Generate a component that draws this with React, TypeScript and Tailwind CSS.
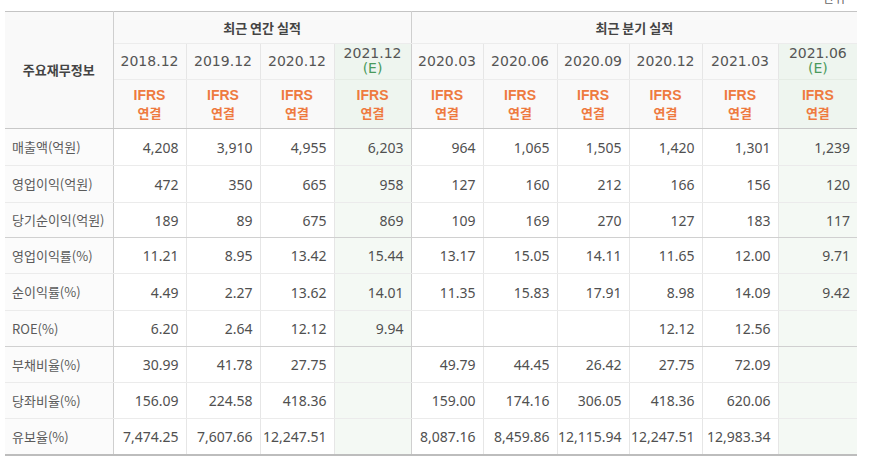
import React from "react";

const annual = ["2018.12", "2019.12", "2020.12"];
const quarter = ["2020.03", "2020.06", "2020.09", "2020.12", "2021.03"];
const widths = [108, 73, 74, 74, 77, 72, 74, 72, 73, 76, 79];

type Row = { label: string; v: string[]; h: number; strong?: boolean };

const rows: Row[] = [
  { label: "매출액(억원)", v: ["4,208", "3,910", "4,955", "6,203", "964", "1,065", "1,505", "1,420", "1,301", "1,239"], h: 37 },
  { label: "영업이익(억원)", v: ["472", "350", "665", "958", "127", "160", "212", "166", "156", "120"], h: 37 },
  { label: "당기순이익(억원)", v: ["189", "89", "675", "869", "109", "169", "270", "127", "183", "117"], h: 35, strong: true },
  { label: "영업이익률(%)", v: ["11.21", "8.95", "13.42", "15.44", "13.17", "15.05", "14.11", "11.65", "12.00", "9.71"], h: 36 },
  { label: "순이익률(%)", v: ["4.49", "2.27", "13.62", "14.01", "11.35", "15.83", "17.91", "8.98", "14.09", "9.42"], h: 37 },
  { label: "ROE(%)", v: ["6.20", "2.64", "12.12", "9.94", "", "", "", "12.12", "12.56", ""], h: 36, strong: true },
  { label: "부채비율(%)", v: ["30.99", "41.78", "27.75", "", "49.79", "44.45", "26.42", "27.75", "72.09", ""], h: 36 },
  { label: "당좌비율(%)", v: ["156.09", "224.58", "418.36", "", "159.00", "174.16", "306.05", "418.36", "620.06", ""], h: 36 },
  { label: "유보율(%)", v: ["7,474.25", "7,607.66", "12,247.51", "", "8,087.16", "8,459.86", "12,115.94", "12,247.51", "12,983.34", ""], h: 36 },
];

const kr = { fontFamily: '"Noto Sans CJK KR", "Noto Sans", sans-serif' };
const dateFont = { fontFamily: '"DejaVu Sans", "Noto Sans CJK KR", sans-serif' };

function Ifrs() {
  return (
    <div className="flex flex-col items-center text-[13px] font-bold leading-[17px] text-[#ee7a3f]" style={kr}>
      <span style={{ fontFamily: '"Liberation Sans", Arial, sans-serif' }} className="text-[14px]">IFRS</span>
      <span>연결</span>
    </div>
  );
}

export default function App() {
  return (
    <div className="w-[869px] h-[459px] bg-white overflow-hidden" style={kr}>
      <div className="h-[11px] overflow-hidden flex justify-end pr-[24px]">
        <span className="-mt-[9px] text-[12px] leading-[14px] text-[#666]">단위</span>
      </div>
      <table className="ml-[5px] table-fixed border-collapse" style={{ width: 852 }}>
        <colgroup>
          {widths.map((w, i) => (
            <col key={i} style={{ width: w }} />
          ))}
        </colgroup>
        <thead>
          <tr className="h-[32px]">
            <th
              rowSpan={3}
              className="border-t border-t-[#c4c4c4] border-b border-b-[#c8c8c8] border-r border-r-[#cfcfcf] bg-[#f9f9f9] text-[13px] font-bold text-[#444]"
            >
              주요재무정보
            </th>
            <th
              colSpan={4}
              className="border-t border-t-[#c4c4c4] border-r border-r-[#cfcfcf] border-b border-b-[#ececec] bg-[#f9f9f9] text-[13px] font-bold text-[#444]"
            >
              최근 연간 실적
            </th>
            <th
              colSpan={6}
              className="border-t border-t-[#c4c4c4] border-b border-b-[#ececec] bg-[#f9f9f9] text-[13px] font-bold text-[#444]"
            >
              최근 분기 실적
            </th>
          </tr>
          <tr className="h-[36px]">
            {annual.map((d) => (
              <th key={d} className="border-r border-r-[#e6e6e6] border-b border-b-[#ececec] bg-[#f9f9f9] text-[14px] font-normal text-[#555]" style={dateFont}>
                {d}
              </th>
            ))}
            <th className="border-r border-r-[#cfcfcf] border-b border-b-[#e4ece4] bg-[#eef5ef] text-[14px] font-normal text-[#555] leading-[15px]" style={dateFont}>
              <div className="flex flex-col items-center -mt-[2px]">
                <span>2021.12</span>
                <span className="text-[#4a9a5c]">(E)</span>
              </div>
            </th>
            {quarter.map((d) => (
              <th key={d} className="border-r border-r-[#e6e6e6] border-b border-b-[#ececec] bg-[#f9f9f9] text-[14px] font-normal text-[#555]" style={dateFont}>
                {d}
              </th>
            ))}
            <th className="border-b border-b-[#e4ece4] bg-[#eef5ef] text-[14px] font-normal text-[#555] leading-[15px]" style={dateFont}>
              <div className="flex flex-col items-center -mt-[2px]">
                <span>2021.06</span>
                <span className="text-[#4a9a5c]">(E)</span>
              </div>
            </th>
          </tr>
          <tr className="h-[49px]">
            {Array.from({ length: 10 }).map((_, i) => {
              const est = i === 3 || i === 9;
              const rb = i === 3 ? "border-r border-r-[#cfcfcf]" : i === 9 ? "" : "border-r border-r-[#e6e6e6]";
              return (
                <th key={i} className={`${rb} border-b border-b-[#c8c8c8] ${est ? "bg-[#eef5ef]" : "bg-[#f9f9f9]"}`}>
                  <Ifrs />
                </th>
              );
            })}
          </tr>
        </thead>
        <tbody>
          {rows.map((r, ri) => {
            const last = ri === rows.length - 1;
            const bb = last ? "border-b-2 border-b-[#bdbdbd]" : r.strong ? "border-b border-b-[#d0d0d0]" : "border-b border-b-[#ebebeb]";
            return (
              <tr key={r.label} style={{ height: r.h }}>
                <td className={`${bb} border-r border-r-[#cfcfcf] bg-[#fbfbfb] pl-[7px] text-[13px] text-[#5a5a5a]`}>{r.label}</td>
                {r.v.map((v, i) => {
                  const est = i === 3 || i === 9;
                  const rb = i === 3 ? "border-r border-r-[#cfcfcf]" : i === 9 ? "" : "border-r border-r-[#e6e6e6]";
                  return (
                    <td
                      key={i}
                      className={`${bb} ${rb} ${est ? "bg-[#f4f9f4]" : "bg-white"} pr-[7px] text-right text-[14px] text-[#505050]`}
                      style={{ fontFamily: '"Noto Sans", "Noto Sans CJK KR", sans-serif' }}
                    >
                      {v}
                    </td>
                  );
                })}
              </tr>
            );
          })}
        </tbody>
      </table>
    </div>
  );
}
